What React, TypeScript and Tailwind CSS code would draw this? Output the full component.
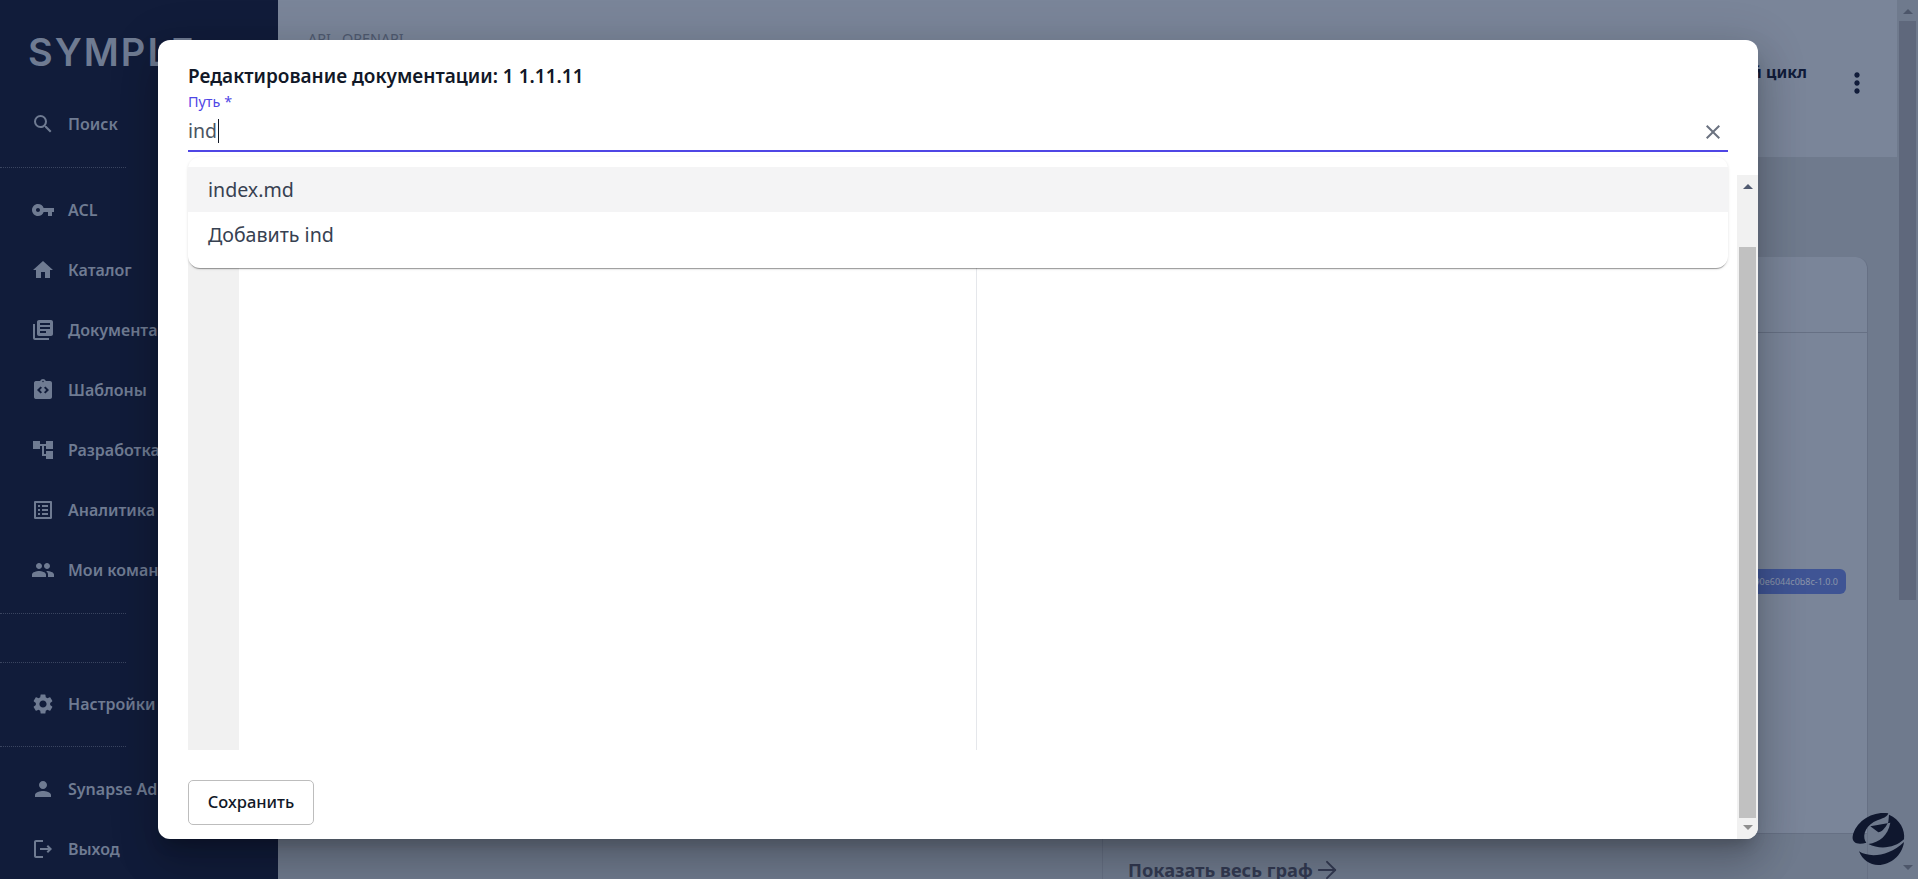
import { MdSearch, MdVpnKey, MdHome, MdLibraryBooks, MdIntegrationInstructions, MdAccountTree, MdListAlt, MdPeople, MdSettings, MdPerson, MdOutlineLogout, MdMoreVert, MdClose, MdArrowDropUp, MdArrowDropDown } from 'react-icons/md';
import { ArrowRight } from 'lucide-react';
import type { IconType } from 'react-icons';

const NavItem = ({ icon: Icon, label }: { icon: IconType; label: string }) => (
  <div className="flex h-[60px] items-center gap-[13px] pl-[31px]">
    <Icon className="h-6 w-6 shrink-0 text-[#6f7b92]" />
    <span className="whitespace-nowrap text-base font-semibold text-[#6f7b92]">{label}</span>
  </div>
);

const Divider = () => <div className="h-px w-[126px] border-t border-dotted border-[#3a4560]" />;

const Sidebar = () => (
  <aside className="flex h-full w-[278px] shrink-0 flex-col overflow-hidden bg-[#111c3a]">
    <div className="h-[94px] pl-[28px] pt-[32px] font-['Inter',sans-serif] text-[38px] font-semibold leading-[40px] tracking-[2px] text-[#6f7b92]">SYMPLE</div>
    <NavItem icon={MdSearch} label="Поиск" />
    <div className="h-[13px]" />
    <Divider />
    <div className="h-[12px]" />
    <NavItem icon={MdVpnKey} label="ACL" />
    <NavItem icon={MdHome} label="Каталог" />
    <NavItem icon={MdLibraryBooks} label="Документация" />
    <NavItem icon={MdIntegrationInstructions} label="Шаблоны" />
    <NavItem icon={MdAccountTree} label="Разработка" />
    <NavItem icon={MdListAlt} label="Аналитика" />
    <NavItem icon={MdPeople} label="Мои команды" />
    <div className="h-[13px]" />
    <Divider />
    <div className="h-[48px]" />
    <Divider />
    <div className="h-[11px]" />
    <NavItem icon={MdSettings} label="Настройки" />
    <div className="h-[12px]" />
    <Divider />
    <div className="h-[12px]" />
    <NavItem icon={MdPerson} label="Synapse Admin" />
    <NavItem icon={MdOutlineLogout} label="Выход" />
  </aside>
);

const Page = () => (
  <main className="flex h-full min-w-0 flex-1 flex-col overflow-hidden bg-[#6f7a8d]">
    <header className="flex h-[157px] shrink-0 justify-between bg-[#7a8599] pl-[30px] pr-[24px] pt-[31px]">
      <div className="text-[14.4px] leading-4 text-[#4f5a70]">API&nbsp;&nbsp;&nbsp;OPENAPI</div>
      <div className="flex items-start gap-[34px] pt-[29px]">
        <span className="text-base font-bold leading-[24px] text-[#111c3a]">Жизненный цикл</span>
        <MdMoreVert className="mt-[7px] h-8 w-8 text-[#111c3a]" />
      </div>
    </header>
    <div className="flex min-h-0 flex-1 flex-col pl-[824px] pt-[100px]">
      <section className="flex h-[577px] w-[766px] shrink-0 flex-col rounded-t-xl border-x border-b border-[#667084] bg-[#7a8599]">
        <div className="h-[76px] shrink-0 border-b border-[#667084]" />
        <div className="flex justify-end pr-[21px] pt-[236px]">
          <span className="flex h-[25px] items-center rounded-md bg-[#3f5494] px-2 text-[9px] text-[#8b94aa]">b5d90e6044c0b8c-1.0.0</span>
        </div>
      </section>
      <div className="flex w-[766px] flex-1 items-start border-x border-[#667084] pl-[25px] pt-[22px]">
        <span className="mt-[2px] whitespace-nowrap text-[18.3px] font-bold leading-[24px] text-[#333a52]">Показать весь граф</span>
        <ArrowRight className="h-7 w-7 shrink-0 text-[#333a52]" strokeWidth={1.6} />
      </div>
    </div>
  </main>
);

const ScrollBar = ({ className, thumb, arrow, arrowDown }: { className: string; thumb: string; arrow: string; arrowDown: string }) => (
  <div className={`flex shrink-0 flex-col items-center ${className}`}>
    <MdArrowDropUp className={`h-[24px] w-[24px] shrink-0 ${arrow}`} />
    <div className="min-h-0 flex-1">
      <div className={`w-[17px] ${thumb}`} />
    </div>
    <MdArrowDropDown className={`-mt-[3px] h-[24px] w-[24px] shrink-0 ${arrowDown}`} />
  </div>
);

const Modal = () => (
  <div className="absolute left-[158px] top-[40px] flex h-[799px] w-[1600px] flex-col overflow-hidden rounded-xl bg-white shadow-[0_11px_15px_-7px_rgba(0,0,0,0.2),0_24px_38px_3px_rgba(0,0,0,0.14),0_9px_46px_8px_rgba(0,0,0,0.12)]">
    <div className="relative h-[135px] shrink-0 px-[30px] pt-6">
      <h2 className="text-[19px] font-semibold leading-6 text-[#111827]">Редактирование документации: 1 1.11.11</h2>
      <div className="mt-[6px] text-[14.4px] leading-4 text-[#4f46e5]">Путь *</div>
      <div className="flex h-[42px] items-center justify-between border-b-2 border-[#4f46e5] pt-[2px]">
        <div className="flex items-center text-[19.5px] text-[#4b5563]">
          ind
          <span className="ml-px h-[24px] w-px bg-[#111827]" />
        </div>
        <MdClose className="mr-[3px] mt-px h-6 w-6 text-[#6b7280]" />
      </div>
      <ul className="absolute left-[30px] right-[30px] top-[117px] z-10 h-[111px] rounded-xl bg-white py-[10px] text-[19.6px] text-[#374151] shadow-[0_2px_1px_-1px_rgba(0,0,0,0.35),0_1px_3px_rgba(0,0,0,0.12)]">
        <li className="flex h-[45px] items-center bg-[#f4f4f5] px-5 pt-px">index.md</li>
        <li className="flex h-[45px] items-center px-5 pt-px">Добавить ind</li>
      </ul>
    </div>
    <div className="flex min-h-0 flex-1">
      <div className="flex min-w-0 flex-1 flex-col pl-[30px] pr-[9px]">
        <div className="flex h-[575px] shrink-0">
          <div className="w-[51px] shrink-0 bg-[#f1f1f1]" />
          <div className="w-[738px] shrink-0 border-r border-[#e5e7eb]" />
          <div className="flex-1" />
        </div>
        <button className="mt-[30px] h-[45px] w-[126px] rounded-[5px] border border-[#bdbdbd] bg-white text-[16.5px] font-medium text-[#111827]">Сохранить</button>
      </div>
      <ScrollBar className="w-[21px] bg-[#f1f1f1]" thumb="mt-[48px] h-[571px] bg-[#c1c1c1]" arrow="text-[#505a70]" arrowDown="text-[#8f8f8f]" />
    </div>
  </div>
);

// Floating chat widget logo, bottom right corner
const WidgetLogo = () => (
  <svg className="absolute bottom-0 right-0 h-[71px] w-[73px]" viewBox="0 0 219 213" fill="#0f172e">
    <path d="M130 16C85 8 32 38 23 85C20 106 40 112 64 104C52 90 56 60 86 42C102 33 126 31 130 16Z" />
    <path d="M132 20C165 34 181 66 177 94C150 120 105 126 70 108C104 102 128 84 136 44L76 55L100 73C110 72 120 62 130 42L132 20Z" />
    <path d="M42 130C72 150 132 146 177 102C172 142 136 171 100 171C74 171 52 155 42 130Z" />
  </svg>
);

const App = () => (
  <div className="relative flex h-screen w-full overflow-hidden font-['Noto_Sans',sans-serif]">
    <Sidebar />
    <Page />
    <ScrollBar className="h-full w-[21px] bg-[#6f7a8d]" thumb="-mt-[3px] h-[579px] bg-[#5f687c]" arrow="text-[#4d566a]" arrowDown="text-[#4d566a]" />
    <Modal />
    <WidgetLogo />
  </div>
);

export default App;
